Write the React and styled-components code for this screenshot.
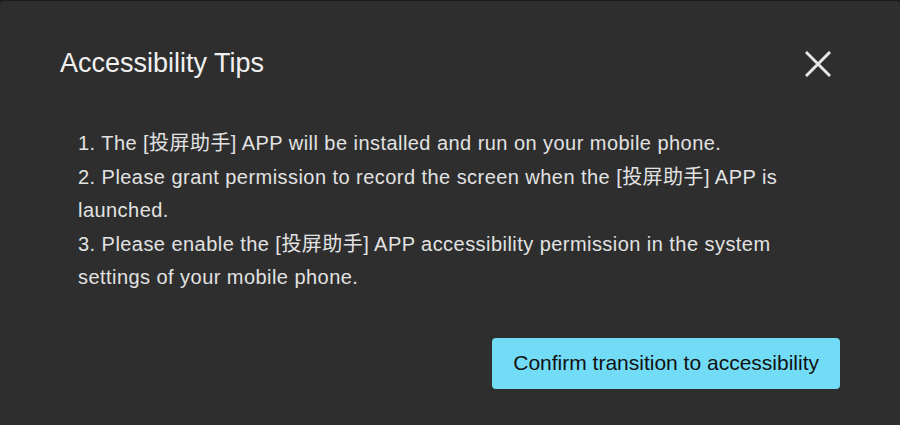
import styled, { createGlobalStyle } from 'styled-components';

const GlobalStyle = createGlobalStyle`
  html, body {
    margin: 0;
    padding: 0;
    background: #1c1c1c;
  }
`;

const tips = [
  'The [投屏助手] APP will be installed and run on your mobile phone.',
  'Please grant permission to record the screen when the [投屏助手] APP is launched.',
  'Please enable the [投屏助手] APP accessibility permission in the system settings of your mobile phone.',
];

export default function App() {
  return (
    <>
      <GlobalStyle />
      <Dialog>
        <Header>
          <Title>Accessibility Tips</Title>
          <CloseButton aria-label="close">
            <svg width="26" height="26" viewBox="0 0 26 26">
              <path d="M2 2 L24 24 M24 2 L2 24" stroke="#e6e6e6" strokeWidth="3" strokeLinecap="square" />
            </svg>
          </CloseButton>
        </Header>
        <TipList>
          {tips.map((tip, i) => (
            <Tip key={i}>{`${i + 1}. ${tip}`}</Tip>
          ))}
        </TipList>
        <Footer>
          <ConfirmButton>Confirm transition to accessibility</ConfirmButton>
        </Footer>
      </Dialog>
    </>
  );
}

const Dialog = styled.div`
  box-sizing: border-box;
  width: 900px;
  height: 424px;
  margin-top: 1px;
  background: #2e2e2e;
  border-radius: 4px 4px 0 0;
  padding: 47px 60px 0 60px;
  font-family: 'Liberation Sans', Arial, 'Noto Sans CJK SC', sans-serif;
  display: flex;
  flex-direction: column;
`;

const Header = styled.div`
  display: flex;
  align-items: center;
  justify-content: space-between;
  height: 32px;
`;

const Title = styled.span`
  font-size: 27px;
  color: #f0f0f0;
  margin-top: -2px;
`;

const CloseButton = styled.button`
  background: none;
  border: none;
  padding: 0;
  margin-right: 9px;
  width: 26px;
  height: 26px;
  cursor: pointer;
  display: flex;
`;

const TipList = styled.div`
  margin-top: 47px;
  padding-left: 18px;
  padding-right: 40px;
  display: flex;
  flex-direction: column;
`;

const Tip = styled.p`
  margin: 0;
  font-size: 20px;
  letter-spacing: 0.45px;
  line-height: 33.5px;
  color: #e2e2e2;
`;

const Footer = styled.div`
  display: flex;
  justify-content: flex-end;
  margin-top: 43px;
`;

const ConfirmButton = styled.button`
  height: 51px;
  padding: 0 21px;
  background: #72dcf6;
  border: none;
  border-radius: 4px;
  font-family: 'Liberation Sans', Arial, sans-serif;
  font-size: 21px;
  color: #111;
  cursor: pointer;
`;
